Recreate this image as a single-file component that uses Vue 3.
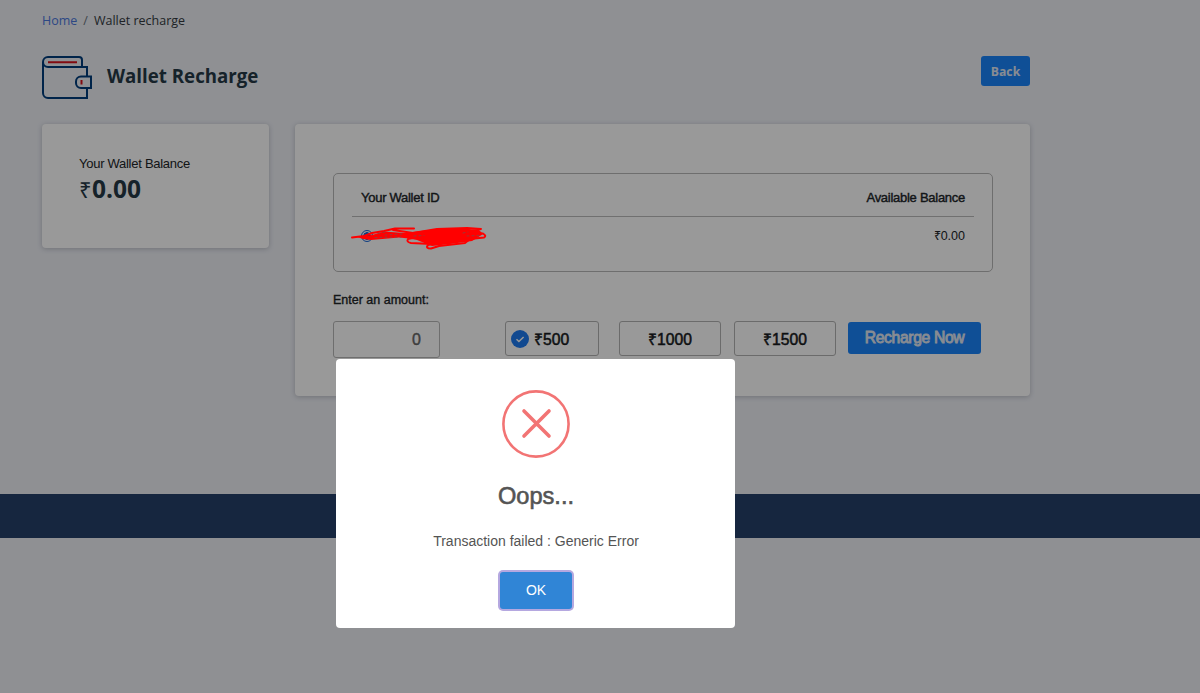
<template>
  <div class="page">
    <main class="container">
      <nav class="breadcrumb">
        <a href="#">Home</a><span class="slash">/</span><span>Wallet recharge</span>
      </nav>

      <header class="page-header">
        <svg class="wallet-icon" viewBox="0 0 50 43" fill="none" stroke="#003d7c" stroke-width="2">
          <path d="M40 11V4a3 3 0 0 0-3-3H6a5 5 0 0 0 0 10h39v9" />
          <path d="M1 6v31a5 5 0 0 0 5 5h39V32" />
          <path d="M49 20.500H39a5 5 0 0 0-5 5v1.500a5 5 0 0 0 5 5h10z" />
          <path d="M6 6.300h29M39.500 24v4.500" stroke="#d8121c" />
        </svg>
        <h1>Wallet Recharge</h1>
        <button class="btn back-btn">Back</button>
      </header>

      <div class="columns">
        <section class="card balance-card">
          <p class="balance-label">Your Wallet Balance</p>
          <p class="balance-value"><span class="rupee">₹</span>{{ balance }}</p>
        </section>

        <section class="card recharge-card">
          <div class="wallet-table">
            <div class="wallet-head">
              <span class="wallet-title">Your Wallet ID</span>
              <span class="available-title">Available Balance</span>
            </div>
            <div class="wallet-row">
              <span class="radio"></span>
              <span class="wallet-amount">₹{{ balance }}</span>
            </div>
          </div>

          <label class="amount-label" for="amount">Enter an amount:</label>
          <div class="amount-row">
            <input id="amount" v-model="amount" class="amount-input" type="text" />
            <div class="presets">
              <button
                v-for="preset in presets"
                :key="preset"
                class="preset"
                :class="{ selected: preset === selected }"
                @click="selected = preset"
              >
                <svg v-if="preset === selected" class="check" viewBox="0 0 18 18">
                  <circle cx="9" cy="9" r="9" fill="#1d7af0" />
                  <path d="M5.500 9.300l2.400 2.200 4.700-4.500" fill="none" stroke="#fff" stroke-width="1.500" />
                </svg>
                <span>₹{{ preset }}</span>
              </button>
            </div>
            <button class="btn recharge-btn">Recharge Now</button>
          </div>
        </section>
      </div>
    </main>
    <footer class="footer"></footer>

    <div v-if="showAlert" class="overlay">
      <div class="modal" role="dialog">
        <svg class="error-icon" viewBox="0 0 68 68" fill="none" stroke="#f27474">
          <circle cx="34" cy="34" r="32.600" stroke-width="2.600" />
          <path d="M22 21l25 25M47 21l-25 25" stroke-width="3.600" stroke-linecap="round" />
        </svg>
        <h2>Oops...</h2>
        <p>Transaction failed : Generic Error</p>
        <button class="ok-btn" @click="showAlert = false">OK</button>
      </div>
    </div>

    <!-- wallet id is struck out by hand -->
    <svg class="scribble" viewBox="0 0 140 28" fill="none" stroke="#ff0000" stroke-width="2" stroke-linecap="round" stroke-linejoin="round">
      <path fill="#ff0000" stroke="none" d="M2 12.500L14 12l8-1 12-3.500 20 1.500 33-4 32 0 10 1 4 4-6 4-5 3-22 3-18 2-15-6-8-1.500-10-1-28 2.500-8-1-7-2.500z" />
      <path d="M2 13.500L14 12l8-3 12-2 11-2.500h19M43 6l20 3 24-4 30-1 14 1-18 4" />
      <path d="M120 9l13 .500q4 2.500 1 4l-14 1.500-5 4-26 3-8 2.500q-6 0-3-3.500l13-3" />
      <path d="M68 13l-10 2q-2 3 3 4l20 1" />
      <path stroke="#8c4040" stroke-width="0.900" stroke-dasharray="2 3" d="M28 9.500l7-1.500M25 13.500l26-.500M35 11l17-1M64 12l10-.500M113 9l5-1M117 12l13-.500" />
    </svg>
  </div>
</template>

<script setup>
import { ref } from 'vue';

const balance = '0.00';
const amount = ref('0');
const presets = [500, 1000, 1500];
const selected = ref(500);
const showAlert = ref(true);
</script>

<style>
body { margin: 0; overflow: hidden; }
</style>

<style scoped>
* { box-sizing: border-box; }
p, h1, h2 { margin: 0; }
button, input { font-family: inherit; }

.page {
  position: relative;
  height: 693px;
  background: #eef0f6;
  color: #212529;
  font-family: "Liberation Sans", Arial, sans-serif;
  font-size: 13px;
}
.container { width: 988px; height: 494px; margin-left: 42px; padding-top: 12px; }

.breadcrumb {
  height: 18px;
  font: 12.500px/18px "Open Sans", sans-serif;
  color: #343a40;
}
.breadcrumb a { color: #4b78dd; text-decoration: none; }
.slash { margin: 0 6px; color: #6c757d; }

.page-header { display: flex; margin-top: 26px; height: 43px; }
.wallet-icon { width: 50px; height: 43px; }
.page-header h1 {
  margin-left: 15px;
  font: 700 18.700px/40px "Open Sans", sans-serif;
  color: #263a46;
}
.btn {
  border: 0;
  border-radius: 3px;
  background: #1a84fb;
  color: #fff;
  padding: 0;
}
.back-btn {
  width: 49px;
  height: 30px;
  margin-left: auto;
  color: #e3eaf4;
  font: 700 12.200px "Open Sans", sans-serif;
}

.columns { display: flex; align-items: flex-start; gap: 26px; margin-top: 25px; }
.card { background: #fff; border-radius: 4px; box-shadow: 0 1px 5px rgba(40, 45, 60, 0.25); }
.balance-card { width: 227px; height: 124px; padding: 31px 37px; }
.balance-label { line-height: 18px; letter-spacing: -0.270px; white-space: nowrap; }
.balance-value {
  font: 700 24.500px/32px "Open Sans", sans-serif;
  color: #263a46;
}
.rupee { font-weight: 400; font-size: 22px; }

.recharge-card { width: 735px; height: 272px; padding: 49px 37px 0 38px; }
.wallet-table {
  height: 99px;
  padding: 0 18px;
  border: 1px solid #b8b8b8;
  border-radius: 5px;
}
.wallet-head {
  display: flex;
  justify-content: space-between;
  height: 43px;
  padding: 0 9px;
  border-bottom: 1px solid #bbb;
  line-height: 47px;
  letter-spacing: -0.270px;
  -webkit-text-stroke: 0.400px;
}
.wallet-row {
  display: flex;
  align-items: center;
  justify-content: space-between;
  height: 37px;
  padding: 0 9px;
}
.radio {
  width: 12px;
  height: 12px;
  border: 1.500px solid #1a67d8;
  border-radius: 50%;
  background: radial-gradient(#1a67d8 0 3.500px, #fff 4px);
}
.wallet-amount { font-size: 12.500px; }

.amount-label {
  display: block;
  margin-top: 19px;
  line-height: 18px;
  font-size: 12.500px;
  -webkit-text-stroke: 0.350px;
}
.amount-row { display: flex; align-items: flex-start; margin-top: 12px; }
.amount-input {
  width: 107px;
  height: 37px;
  padding: 0 18px;
  border: 1px solid #b8b8b8;
  border-radius: 3px;
  background: transparent;
  color: #666;
  font-size: 16px;
  text-align: right;
  -webkit-text-stroke: 0.400px;
}
.presets { display: flex; gap: 13px; margin: 0 12px 0 65px; }
.presets .preset:first-child { margin-right: 7px; }
.preset {
  display: flex;
  align-items: center;
  justify-content: center;
  width: 102px;
  height: 35px;
  padding: 0;
  border: 1px solid #b2b2b2;
  border-radius: 3px;
  background: transparent;
  color: #171a1d;
  font-size: 15.700px;
  -webkit-text-stroke: 0.500px;
}
.preset.selected { justify-content: flex-start; width: 94px; padding-left: 5px; gap: 5px; }
.check { width: 18px; height: 18px; }
.recharge-btn {
  width: 133px;
  height: 32px;
  margin-top: 1px;
  color: #e3eaf4;
  font-size: 15.700px;
  letter-spacing: -0.350px;
  -webkit-text-stroke: 0.800px;
}

.footer { height: 44px; background: #254069; }

.overlay { position: absolute; inset: 0; background: rgba(0, 0, 0, 0.4); }
.modal {
  position: absolute;
  top: 359px;
  left: 336px;
  display: flex;
  flex-direction: column;
  align-items: center;
  width: 399px;
  height: 269px;
  padding: 31px 0 0 1px;
  border-radius: 4px;
  background: #fff;
}
.error-icon { width: 68px; height: 68px; }
.modal h2 {
  margin-top: 20px;
  font-size: 23.600px;
  font-weight: 400;
  line-height: 36px;
  color: #545454;
  -webkit-text-stroke: 0.600px;
}
.modal p { margin-top: 16px; font-size: 14px; line-height: 22px; color: #545454; }
.ok-btn {
  width: 72px;
  height: 37px;
  margin-top: 20px;
  padding: 0 0 2px;
  border: 0;
  border-radius: 3px;
  background: #3085d6;
  box-shadow: 0 0 0 2px #b5a8e0;
  color: #fff;
  font-size: 14px;
}

.scribble { position: absolute; top: 224px; left: 350px; width: 140px; height: 28px; }
</style>
